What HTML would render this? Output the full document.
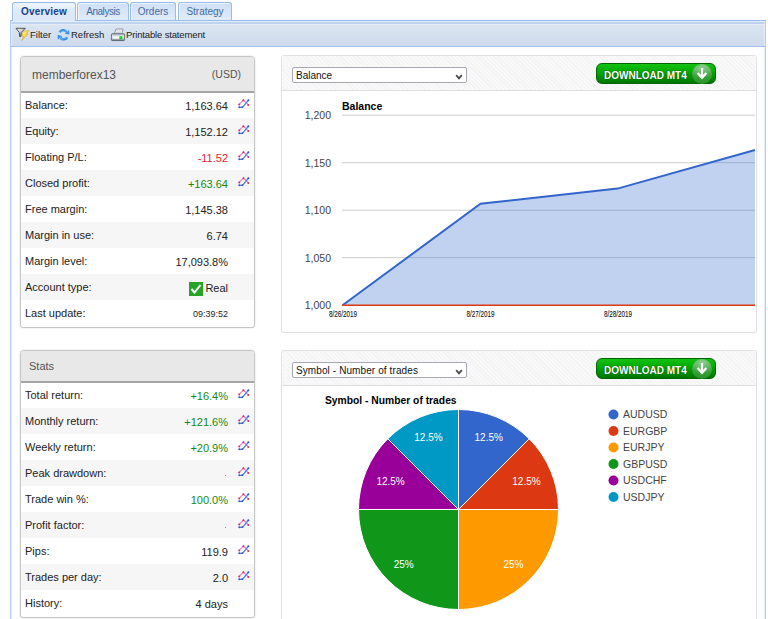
<!DOCTYPE html>
<html><head><meta charset="utf-8">
<style>
*{box-sizing:border-box}
html,body{margin:0;padding:0;background:#fff;width:768px;height:619px;overflow:hidden;font-family:"Liberation Sans",sans-serif;position:relative}
.a{position:absolute}
.tab{position:absolute;border:1px solid #99bbe8;border-bottom:none;border-radius:3px 3px 0 0;background:linear-gradient(#e3edfa 0,#e3edfa 1px,#d0e0f5 1px,#dbe7f8 60%,#e2edfb);font-size:10px;color:#416aa3;white-space:nowrap;box-shadow:inset 1px 1px 0 #edf3fc}
.tab span{position:absolute;top:3px;left:0;right:0;text-align:center}
#outer{left:10px;top:20px;width:756px;height:620px;border-left:1px solid #b3cbee;border-right:1px solid #b3cbee;box-shadow:inset 1px 0 0 #e6eefa,inset -1px 0 0 #e6eefa}
#tb{left:10px;top:20px;width:756px;height:27px;border:1px solid #99bbe8;border-left-color:#b0c9ee;border-right-color:#b0c9ee;border-bottom-color:#a5c2ea;box-shadow:inset 1px 0 0 rgba(255,255,255,.45),inset -1px 0 0 rgba(255,255,255,.45);background:linear-gradient(#e4edfa 0,#e4edfa 1px,#bed3ee 1px,#bed3ee 3px,#e3ebf7 3px,#e3ebf7 4px,#dbe5f2 4px,#cedbec 100%);}
.tbt{position:absolute;top:29px;font-size:9.5px;color:#222;white-space:nowrap}
.lp{position:absolute;left:20px;width:235px;border:1px solid #c6c6c6;border-radius:4px 4px 3px 3px;background:#fff;box-shadow:0 0 2px rgba(0,0,0,.15);overflow:hidden}
.lph{position:absolute;left:0;top:0;width:233px;z-index:2;background:#e8e8e8;border-bottom:2px solid #a5a5a5}
.row{position:absolute;left:0;width:233px;height:26px;font-size:11px;color:#222;white-space:nowrap}
.row.alt{background:#f6f6f6}
.row .l{position:absolute;left:4px;top:7px}
.row .v{position:absolute;right:26px;top:8px;text-align:right}
.row svg{position:absolute;left:217px;top:7px}
.rp{position:absolute;left:281px;width:476px;border:1px solid #e2e2e2;box-shadow:0 0 1px rgba(0,0,0,.06);border-radius:3px;background:#fff;overflow:hidden}
.rph{position:absolute;left:0;top:0;width:474px;height:35px;border-bottom:1px solid #dedede;background:repeating-linear-gradient(45deg,#f9f9f9 0,#f9f9f9 2px,#f3f3f3 2px,#f3f3f3 3px)}
.sel{position:absolute;left:10px;top:11px;width:175px;height:16px;border:1px solid #a8a9b0;border-radius:2px;background:#fff;font-size:10px;color:#111;white-space:nowrap}
.sel span{position:absolute;left:3px;top:2px}
.sel svg{position:absolute;right:3px;top:6px}
.btn{position:absolute;left:314px;top:7px;width:120px;height:21px;border-radius:6px;background:linear-gradient(#12c212,#00a800 45%,#008800 80%,#007600);border:1px solid #006400;color:#fff;font-weight:bold;font-size:10px;white-space:nowrap}
.btn span{position:absolute;left:7px;top:6px;text-shadow:0 0 1px #035003,0 0 1px #035003}
.btn i{position:absolute;left:94.5px;top:-0.5px;width:20px;height:20px;border-radius:50%;background:radial-gradient(ellipse 70% 50% at 50% 20%,rgba(255,255,255,.45),rgba(255,255,255,.12) 100%),linear-gradient(#3aaa3a,#1f951f 60%,#0b840b)}
.red{color:#dd1f1f}.grn{color:#138a13}
</style></head><body>

<!-- tabs -->
<div class="tab" style="left:12px;top:2px;width:64px;height:19px;background:linear-gradient(#f3f7fd,#deeafa 40%,#dce8f8);color:#15428b;font-weight:bold;font-size:10px;z-index:3"><span style="top:3px;left:8px;right:auto;letter-spacing:0.2px">Overview</span></div>
<div class="tab" style="left:77px;top:2px;width:52px;height:19px"><span style="letter-spacing:-0.45px">Analysis</span></div>
<div class="tab" style="left:130px;top:2px;width:46px;height:19px"><span>Orders</span></div>
<div class="tab" style="left:178px;top:2px;width:54px;height:19px"><span>Strategy</span></div>

<div id="outer" class="a"></div>
<div id="tb" class="a"></div>
<!-- toolbar icons -->
<svg class="a" style="left:14px;top:25px" width="18" height="18" viewBox="0 0 18 18">
 <defs><linearGradient id="fg" x1="0" y1="0" x2="1" y2="1"><stop offset="0" stop-color="#ffffff"/><stop offset=".45" stop-color="#d0d0d0"/><stop offset="1" stop-color="#555"/></linearGradient>
 <linearGradient id="lg" x1="0" y1="0" x2="1" y2="1"><stop offset="0" stop-color="#fffbd0"/><stop offset=".5" stop-color="#f9d93c"/><stop offset="1" stop-color="#e8b310"/></linearGradient></defs>
 <path d="M2 3.3 L11.3 3.3 L7.2 7.6 L7.1 11.2 L5.6 11.6 L5.4 7.6 Z" fill="url(#fg)" stroke="#505050" stroke-width="1" stroke-linejoin="round"/>
 <path d="M9 6.3 L15 5.6 L12.3 9.3 L14 9.3 L7.6 15.6 L9.7 11.3 L8 11.3 Z" fill="url(#lg)" stroke="#c99a18" stroke-width=".5" stroke-linejoin="round"/>
</svg>
<div class="tbt" style="left:30px">Filter</div>
<svg class="a" style="left:54px;top:25px" width="18" height="18" viewBox="0 0 18 18">
 <defs><linearGradient id="rg" x1="0" y1="0" x2="1" y2="1"><stop offset="0" stop-color="#2a86e6"/><stop offset=".5" stop-color="#5aaaf2"/><stop offset="1" stop-color="#2a7ee0"/></linearGradient></defs>
 <path d="M5.60 7.36 A4.6 4.6 0 0 1 12.6 6.6" fill="none" stroke="url(#rg)" stroke-width="2.5"/>
 <path d="M15.23 4.95 L15.34 9.80 L10.65 8.52 Z" fill="#3c94ea"/>
 <path d="M13.40 12.24 A4.6 4.6 0 0 1 6.4 13" fill="none" stroke="url(#rg)" stroke-width="2.5"/>
 <path d="M3.77 14.65 L3.66 9.80 L8.35 11.08 Z" fill="#3c94ea"/>
</svg>
<div class="tbt" style="left:71px">Refresh</div>
<svg class="a" style="left:109px;top:25px" width="18" height="18" viewBox="0 0 18 18">
 <defs><linearGradient id="pg" x1="0" y1="0" x2="0" y2="1"><stop offset="0" stop-color="#b4bcc8"/><stop offset=".45" stop-color="#eef1f5"/><stop offset=".7" stop-color="#c9cfd8"/><stop offset="1" stop-color="#5d6673"/></linearGradient></defs>
 <path d="M7 4 L14.2 4 L12.8 9 L5.4 9 Z" fill="#f2f4f8" stroke="#7d8794" stroke-width=".8"/>
 <path d="M7.5 6 L12.5 6 M7 7.5 L12 7.5" stroke="#b8bec8" stroke-width=".6"/>
 <path d="M3.2 8.8 L14.8 8.8 Q15.6 8.8 15.6 9.8 L15.6 14.6 Q15.6 15.6 14.6 15.6 L3.4 15.6 Q2.4 15.6 2.4 14.6 L2.4 9.8 Q2.4 8.8 3.2 8.8 Z" fill="url(#pg)" stroke="#4e5763" stroke-width=".8"/>
 <rect x="4" y="12" width="6" height="1.6" fill="#fafbfc"/>
 <rect x="10.4" y="11.2" width="3" height="3" fill="#19d919"/>
</svg>
<div class="tbt" style="left:126px;letter-spacing:-0.15px">Printable statement</div>

<!-- left panel 1 -->
<div class="lp" style="top:56px;height:272px">
 <div class="lph" style="height:36px">
  <div class="a" style="left:11px;top:11px;font-size:12px;color:#555">memberforex13</div>
  <div class="a" style="right:13px;top:11px;font-size:10.5px;color:#555">(USD)</div>
 </div>
 <div class="row" style="top:35px"><span class="l">Balance:</span><span class="v">1,163.64</span><svg width="13" height="10"><path d="M1 5.5 L5.5 1 L10.5 6" fill="none" stroke="#ee88bb" stroke-width="1.1"/>   <circle cx="1.2" cy="5.4" r="1" fill="#c8307a"/><circle cx="5.4" cy="1.3" r="1" fill="#c8307a"/><circle cx="10.3" cy="6.1" r="1" fill="#c8307a"/>   <path d="M1 8.3 L4.5 8.3 L10.5 1" fill="none" stroke="#5a7fe0" stroke-width="1.3"/>   <circle cx="1.3" cy="8.2" r="1" fill="#3055cc"/><circle cx="4.3" cy="8.2" r="0.9" fill="#3055cc"/><circle cx="10.4" cy="1.2" r="1" fill="#3055cc"/></svg></div>
 <div class="row alt" style="top:61px"><span class="l">Equity:</span><span class="v">1,152.12</span><svg width="13" height="10"><path d="M1 5.5 L5.5 1 L10.5 6" fill="none" stroke="#ee88bb" stroke-width="1.1"/>   <circle cx="1.2" cy="5.4" r="1" fill="#c8307a"/><circle cx="5.4" cy="1.3" r="1" fill="#c8307a"/><circle cx="10.3" cy="6.1" r="1" fill="#c8307a"/>   <path d="M1 8.3 L4.5 8.3 L10.5 1" fill="none" stroke="#5a7fe0" stroke-width="1.3"/>   <circle cx="1.3" cy="8.2" r="1" fill="#3055cc"/><circle cx="4.3" cy="8.2" r="0.9" fill="#3055cc"/><circle cx="10.4" cy="1.2" r="1" fill="#3055cc"/></svg></div>
 <div class="row" style="top:87px"><span class="l">Floating P/L:</span><span class="v red">-11.52</span><svg width="13" height="10"><path d="M1 5.5 L5.5 1 L10.5 6" fill="none" stroke="#ee88bb" stroke-width="1.1"/>   <circle cx="1.2" cy="5.4" r="1" fill="#c8307a"/><circle cx="5.4" cy="1.3" r="1" fill="#c8307a"/><circle cx="10.3" cy="6.1" r="1" fill="#c8307a"/>   <path d="M1 8.3 L4.5 8.3 L10.5 1" fill="none" stroke="#5a7fe0" stroke-width="1.3"/>   <circle cx="1.3" cy="8.2" r="1" fill="#3055cc"/><circle cx="4.3" cy="8.2" r="0.9" fill="#3055cc"/><circle cx="10.4" cy="1.2" r="1" fill="#3055cc"/></svg></div>
 <div class="row alt" style="top:113px"><span class="l">Closed profit:</span><span class="v grn">+163.64</span><svg width="13" height="10"><path d="M1 5.5 L5.5 1 L10.5 6" fill="none" stroke="#ee88bb" stroke-width="1.1"/>   <circle cx="1.2" cy="5.4" r="1" fill="#c8307a"/><circle cx="5.4" cy="1.3" r="1" fill="#c8307a"/><circle cx="10.3" cy="6.1" r="1" fill="#c8307a"/>   <path d="M1 8.3 L4.5 8.3 L10.5 1" fill="none" stroke="#5a7fe0" stroke-width="1.3"/>   <circle cx="1.3" cy="8.2" r="1" fill="#3055cc"/><circle cx="4.3" cy="8.2" r="0.9" fill="#3055cc"/><circle cx="10.4" cy="1.2" r="1" fill="#3055cc"/></svg></div>
 <div class="row" style="top:139px"><span class="l">Free margin:</span><span class="v">1,145.38</span></div>
 <div class="row alt" style="top:165px"><span class="l">Margin in use:</span><span class="v">6.74</span></div>
 <div class="row" style="top:191px"><span class="l">Margin level:</span><span class="v">17,093.8%</span></div>
 <div class="row alt" style="top:217px"><span class="l">Account type:</span><span class="v" style="padding-left:17px">Real</span>
   <svg style="left:168px;top:8px" width="14" height="14" viewBox="0 0 14 14"><rect width="14" height="14" fill="#27a327"/><path d="M2.5 7 L5.5 10.5 L11.5 3" fill="none" stroke="#fff" stroke-width="2"/></svg></div>
 <div class="row" style="top:243px"><span class="l">Last update:</span><span class="v" style="font-size:9px;top:9px">09:39:52</span></div>
</div>

<!-- left panel 2 -->
<div class="lp" style="top:350px;height:268px">
 <div class="lph" style="height:32px">
  <div class="a" style="left:8px;top:9px;font-size:11px;color:#555">Stats</div>
 </div>
 <div class="row" style="top:31px"><span class="l">Total return:</span><span class="v grn">+16.4%</span><svg width="13" height="10"><path d="M1 5.5 L5.5 1 L10.5 6" fill="none" stroke="#ee88bb" stroke-width="1.1"/>   <circle cx="1.2" cy="5.4" r="1" fill="#c8307a"/><circle cx="5.4" cy="1.3" r="1" fill="#c8307a"/><circle cx="10.3" cy="6.1" r="1" fill="#c8307a"/>   <path d="M1 8.3 L4.5 8.3 L10.5 1" fill="none" stroke="#5a7fe0" stroke-width="1.3"/>   <circle cx="1.3" cy="8.2" r="1" fill="#3055cc"/><circle cx="4.3" cy="8.2" r="0.9" fill="#3055cc"/><circle cx="10.4" cy="1.2" r="1" fill="#3055cc"/></svg></div>
 <div class="row alt" style="top:57px"><span class="l">Monthly return:</span><span class="v grn">+121.6%</span><svg width="13" height="10"><path d="M1 5.5 L5.5 1 L10.5 6" fill="none" stroke="#ee88bb" stroke-width="1.1"/>   <circle cx="1.2" cy="5.4" r="1" fill="#c8307a"/><circle cx="5.4" cy="1.3" r="1" fill="#c8307a"/><circle cx="10.3" cy="6.1" r="1" fill="#c8307a"/>   <path d="M1 8.3 L4.5 8.3 L10.5 1" fill="none" stroke="#5a7fe0" stroke-width="1.3"/>   <circle cx="1.3" cy="8.2" r="1" fill="#3055cc"/><circle cx="4.3" cy="8.2" r="0.9" fill="#3055cc"/><circle cx="10.4" cy="1.2" r="1" fill="#3055cc"/></svg></div>
 <div class="row" style="top:83px"><span class="l">Weekly return:</span><span class="v grn">+20.9%</span><svg width="13" height="10"><path d="M1 5.5 L5.5 1 L10.5 6" fill="none" stroke="#ee88bb" stroke-width="1.1"/>   <circle cx="1.2" cy="5.4" r="1" fill="#c8307a"/><circle cx="5.4" cy="1.3" r="1" fill="#c8307a"/><circle cx="10.3" cy="6.1" r="1" fill="#c8307a"/>   <path d="M1 8.3 L4.5 8.3 L10.5 1" fill="none" stroke="#5a7fe0" stroke-width="1.3"/>   <circle cx="1.3" cy="8.2" r="1" fill="#3055cc"/><circle cx="4.3" cy="8.2" r="0.9" fill="#3055cc"/><circle cx="10.4" cy="1.2" r="1" fill="#3055cc"/></svg></div>
 <div class="row alt" style="top:109px"><span class="l">Peak drawdown:</span><span class="a" style="left:204px;top:15px;width:1px;height:1px;background:#8a8a8a"></span><svg width="13" height="10"><path d="M1 5.5 L5.5 1 L10.5 6" fill="none" stroke="#ee88bb" stroke-width="1.1"/>   <circle cx="1.2" cy="5.4" r="1" fill="#c8307a"/><circle cx="5.4" cy="1.3" r="1" fill="#c8307a"/><circle cx="10.3" cy="6.1" r="1" fill="#c8307a"/>   <path d="M1 8.3 L4.5 8.3 L10.5 1" fill="none" stroke="#5a7fe0" stroke-width="1.3"/>   <circle cx="1.3" cy="8.2" r="1" fill="#3055cc"/><circle cx="4.3" cy="8.2" r="0.9" fill="#3055cc"/><circle cx="10.4" cy="1.2" r="1" fill="#3055cc"/></svg></div>
 <div class="row" style="top:135px"><span class="l">Trade win %:</span><span class="v grn">100.0%</span><svg width="13" height="10"><path d="M1 5.5 L5.5 1 L10.5 6" fill="none" stroke="#ee88bb" stroke-width="1.1"/>   <circle cx="1.2" cy="5.4" r="1" fill="#c8307a"/><circle cx="5.4" cy="1.3" r="1" fill="#c8307a"/><circle cx="10.3" cy="6.1" r="1" fill="#c8307a"/>   <path d="M1 8.3 L4.5 8.3 L10.5 1" fill="none" stroke="#5a7fe0" stroke-width="1.3"/>   <circle cx="1.3" cy="8.2" r="1" fill="#3055cc"/><circle cx="4.3" cy="8.2" r="0.9" fill="#3055cc"/><circle cx="10.4" cy="1.2" r="1" fill="#3055cc"/></svg></div>
 <div class="row alt" style="top:161px"><span class="l">Profit factor:</span><span class="a" style="left:204px;top:15px;width:1px;height:1px;background:#8a8a8a"></span><svg width="13" height="10"><path d="M1 5.5 L5.5 1 L10.5 6" fill="none" stroke="#ee88bb" stroke-width="1.1"/>   <circle cx="1.2" cy="5.4" r="1" fill="#c8307a"/><circle cx="5.4" cy="1.3" r="1" fill="#c8307a"/><circle cx="10.3" cy="6.1" r="1" fill="#c8307a"/>   <path d="M1 8.3 L4.5 8.3 L10.5 1" fill="none" stroke="#5a7fe0" stroke-width="1.3"/>   <circle cx="1.3" cy="8.2" r="1" fill="#3055cc"/><circle cx="4.3" cy="8.2" r="0.9" fill="#3055cc"/><circle cx="10.4" cy="1.2" r="1" fill="#3055cc"/></svg></div>
 <div class="row" style="top:187px"><span class="l">Pips:</span><span class="v">119.9</span><svg width="13" height="10"><path d="M1 5.5 L5.5 1 L10.5 6" fill="none" stroke="#ee88bb" stroke-width="1.1"/>   <circle cx="1.2" cy="5.4" r="1" fill="#c8307a"/><circle cx="5.4" cy="1.3" r="1" fill="#c8307a"/><circle cx="10.3" cy="6.1" r="1" fill="#c8307a"/>   <path d="M1 8.3 L4.5 8.3 L10.5 1" fill="none" stroke="#5a7fe0" stroke-width="1.3"/>   <circle cx="1.3" cy="8.2" r="1" fill="#3055cc"/><circle cx="4.3" cy="8.2" r="0.9" fill="#3055cc"/><circle cx="10.4" cy="1.2" r="1" fill="#3055cc"/></svg></div>
 <div class="row alt" style="top:213px"><span class="l">Trades per day:</span><span class="v">2.0</span><svg width="13" height="10"><path d="M1 5.5 L5.5 1 L10.5 6" fill="none" stroke="#ee88bb" stroke-width="1.1"/>   <circle cx="1.2" cy="5.4" r="1" fill="#c8307a"/><circle cx="5.4" cy="1.3" r="1" fill="#c8307a"/><circle cx="10.3" cy="6.1" r="1" fill="#c8307a"/>   <path d="M1 8.3 L4.5 8.3 L10.5 1" fill="none" stroke="#5a7fe0" stroke-width="1.3"/>   <circle cx="1.3" cy="8.2" r="1" fill="#3055cc"/><circle cx="4.3" cy="8.2" r="0.9" fill="#3055cc"/><circle cx="10.4" cy="1.2" r="1" fill="#3055cc"/></svg></div>
 <div class="row" style="top:239px"><span class="l">History:</span><span class="v">4 days</span></div>
</div>



<!-- right panel 1 -->
<div class="rp" style="top:55px;height:278px">
 <div class="rph">
  <div class="sel"><span>Balance</span><svg width="8" height="6" viewBox="0 0 8 6"><path d="M1.2 1.2 L4 4.4 L6.8 1.2" fill="none" stroke="#4a4a4a" stroke-width="1.8"/></svg></div>
  <div class="btn"><span>DOWNLOAD MT4</span><i></i>
   <svg class="a" style="left:99px;top:3px" width="13" height="14" viewBox="0 0 13 14"><path d="M6 1 L6 11 M1.6 6 L6 10.8 L10.4 6" fill="none" stroke="#fff" stroke-width="2.2"/></svg>
  </div>
 </div>
</div>
<!-- balance chart -->
<svg class="a" style="left:0;top:0" width="768" height="619">
 <g font-family="Liberation Sans" font-size="10.5" fill="#444" text-anchor="end">
  <text x="331" y="119">1,200</text>
  <text x="331" y="166.5">1,150</text>
  <text x="331" y="214">1,100</text>
  <text x="331" y="261.5">1,050</text>
  <text x="331" y="309">1,000</text>
 </g>
 <g stroke="#cccccc" stroke-width="1">
  <line x1="342" y1="115.2" x2="755" y2="115.2"/>
  <line x1="342" y1="162.7" x2="755" y2="162.7"/>
  <line x1="342" y1="210.2" x2="755" y2="210.2"/>
  <line x1="342" y1="257.7" x2="755" y2="257.7"/>
 </g>
 <path d="M342.5 305.2 L480.5 203.8 L617.5 188.6 L755 150 L755 305.2 Z" fill="#3366cc" fill-opacity="0.3"/>
 <path d="M342.5 305.2 L480.5 203.8 L617.5 188.6 L755 150" fill="none" stroke="#3366cc" stroke-width="2"/>
 <line x1="342" y1="305.3" x2="755" y2="305.3" stroke="#dc3912" stroke-width="1.6"/>
 <text x="342" y="109.5" font-family="Liberation Sans" font-size="10.5" font-weight="bold" fill="#000">Balance</text>
 <g font-family="Liberation Sans" font-size="8.3" fill="#111" text-anchor="middle" stroke="#111" stroke-width="0.1">
  <text x="343" y="317" textLength="28" lengthAdjust="spacingAndGlyphs">8/26/2019</text>
  <text x="480.5" y="317" textLength="28" lengthAdjust="spacingAndGlyphs">8/27/2019</text>
  <text x="618" y="317" textLength="28" lengthAdjust="spacingAndGlyphs">8/28/2019</text>
 </g>
</svg>

<!-- right panel 2 -->
<div class="rp" style="top:350px;height:280px">
 <div class="rph">
  <div class="sel"><span style="letter-spacing:0.1px">Symbol - Number of trades</span><svg width="8" height="6" viewBox="0 0 8 6"><path d="M1.2 1.2 L4 4.4 L6.8 1.2" fill="none" stroke="#4a4a4a" stroke-width="1.8"/></svg></div>
  <div class="btn"><span>DOWNLOAD MT4</span><i></i>
   <svg class="a" style="left:99px;top:3px" width="13" height="14" viewBox="0 0 13 14"><path d="M6 1 L6 11 M1.6 6 L6 10.8 L10.4 6" fill="none" stroke="#fff" stroke-width="2.2"/></svg>
  </div>
 </div>
</div>
<!-- pie -->
<svg class="a" style="left:0;top:0" width="768" height="619">
 <text x="325" y="403.8" font-family="Liberation Sans" font-size="10.3" font-weight="bold" fill="#000">Symbol - Number of trades</text>
 <g stroke="#fff" stroke-width="1">
  <path d="M458.5 509.5 L458.5 409.5 A100 100 0 0 1 529.2 438.8 Z" fill="#3366cc"/>
  <path d="M458.5 509.5 L529.2 438.8 A100 100 0 0 1 558.5 509.5 Z" fill="#dc3912"/>
  <path d="M458.5 509.5 L558.5 509.5 A100 100 0 0 1 458.5 609.5 Z" fill="#ff9900"/>
  <path d="M458.5 509.5 L458.5 609.5 A100 100 0 0 1 358.5 509.5 Z" fill="#109618"/>
  <path d="M458.5 509.5 L358.5 509.5 A100 100 0 0 1 387.8 438.8 Z" fill="#990099"/>
  <path d="M458.5 509.5 L387.8 438.8 A100 100 0 0 1 458.5 409.5 Z" fill="#0099c6"/>
 </g>
 <g font-family="Liberation Sans" font-size="10" fill="#fff" text-anchor="middle">
  <text x="488.7" y="441">12.5%</text>
  <text x="526.5" y="485">12.5%</text>
  <text x="513.5" y="568">25%</text>
  <text x="403.7" y="568">25%</text>
  <text x="390.6" y="485">12.5%</text>
  <text x="428.5" y="441">12.5%</text>
 </g>
 <g font-family="Liberation Sans" font-size="10.5" fill="#444">
  <circle cx="613.5" cy="414.5" r="5" fill="#3366cc"/><text x="623" y="418">AUDUSD</text>
  <circle cx="613.5" cy="431" r="5" fill="#dc3912"/><text x="623" y="434.5">EURGBP</text>
  <circle cx="613.5" cy="447.5" r="5" fill="#ff9900"/><text x="623" y="451">EURJPY</text>
  <circle cx="613.5" cy="464" r="5" fill="#109618"/><text x="623" y="467.5">GBPUSD</text>
  <circle cx="613.5" cy="480.5" r="5" fill="#990099"/><text x="623" y="484">USDCHF</text>
  <circle cx="613.5" cy="497" r="5" fill="#0099c6"/><text x="623" y="500.5">USDJPY</text>
 </g>
</svg>

</body></html>
